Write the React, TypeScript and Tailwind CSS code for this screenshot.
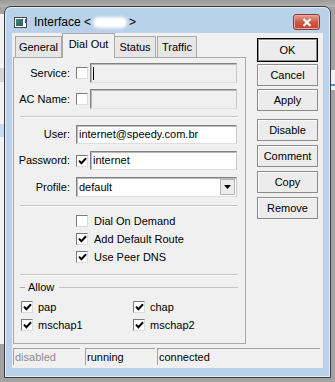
import React from "react";

function Check({ on }: { on?: boolean }) {
  return (
    <span className="flex h-[12px] w-[12px] shrink-0 items-center justify-center border border-t-[#7a7a7a] border-l-[#7a7a7a] border-r-[#dcdcdc] border-b-[#dcdcdc] bg-white">
      {on && (
        <svg width="9" height="8" viewBox="0 0 9 8">
          <path d="M1 3.6 L3.4 6.2 L8 1.2" fill="none" stroke="#000" strokeWidth="2" />
        </svg>
      )}
    </span>
  );
}

function Field({
  value,
  disabled,
  caret,
  className,
}: {
  value?: string;
  disabled?: boolean;
  caret?: boolean;
  className: string;
}) {
  return (
    <div
      className={`flex items-center border border-t-[#828282] border-l-[#828282] border-r-[#c8c8c8] border-b-[#dedede] pl-[2px] shadow-[inset_1px_1px_0_#b9b9b9] ${
        disabled ? "bg-[#f0f0f0]" : "bg-white"
      } ${className}`}
    >
      {caret && <span className="h-[13px] w-px bg-black" />}
      {value && <span className="leading-none">{value}</span>}
    </div>
  );
}

function Row({
  label,
  spacing,
  children,
}: {
  label: string;
  spacing: string;
  children: React.ReactNode;
}) {
  return (
    <div className={`flex items-center ${spacing}`}>
      <span className="w-[56px] text-right">{label}</span>
      <div className="ml-[6px] flex w-[161px] items-center">{children}</div>
    </div>
  );
}

function Sep({ spacing }: { spacing: string }) {
  return <div className={`ml-[6px] h-[2px] w-[218px] border-t border-t-[#c4c4c4] border-b border-b-white ${spacing}`} />;
}

function Btn({ label, spacing, def }: { label: string; spacing: string; def?: boolean }) {
  return (
    <div
      className={`flex w-[61px] items-center justify-center ${spacing} ${
        def ? "border border-black p-0" : ""
      }`}
    >
      <div className="flex h-full w-full items-center justify-center border border-[#8c8c8c] bg-[#ececec] shadow-[inset_1px_1px_0_#fbfbfb]">
        {label}
      </div>
    </div>
  );
}

function Opt({ label, on, gap }: { label: string; on?: boolean; gap: string }) {
  return (
    <div className="flex h-[18px] items-center">
      <Check on={on} />
      <span className={gap}>{label}</span>
    </div>
  );
}

export default function App() {
  return (
    <div className="relative h-[382px] w-[335px] overflow-hidden bg-[#a3a3a3] text-[11px] text-black font-['Liberation_Sans',Arial,sans-serif]">
      {/* desktop behind the dialog */}
      <div className="absolute left-0 top-0 h-[7px] w-[335px] bg-gradient-to-b from-[#9a9a9a] to-[#b4b4b4]" />
      <div className="absolute left-0 top-[14px] h-[330px] w-[5px] bg-[#f3f3f3]" />
      <div className="absolute left-0 top-[68px] h-[14px] w-[4px] bg-[#d6d6d6]" />
      <div className="absolute left-0 top-[124px] h-[13px] w-[5px] bg-[#c7dbf3]" />
      <div className="absolute right-0 top-[70px] h-[20px] w-[5px] bg-[#f0f0f0]" />
      <div className="absolute right-0 top-[84px] h-[2px] w-[5px] bg-[#5b8fd0]" />

      <div className="relative ml-[4px] mt-[6px] flex h-[372px] w-[327px] flex-col rounded-t-[7px] border border-[#3b3b3b] bg-[#b9d1ea] shadow-[inset_0_0_0_1px_#e2edf8]">
        {/* title bar */}
        <div className="flex h-[26px] items-start">
          <div className="ml-[9px] mt-[10px] flex h-[11px] w-[13px] border border-[#4a4a4a] bg-white">
            <div className="ml-px mt-px h-[7px] w-[7px] bg-gradient-to-br from-[#3f8a7e] to-[#2d5a64]" />
            <div className="ml-[2px] mt-px h-[4px] w-px bg-[#2d5a64]" />
          </div>
          <div className="ml-[7px] mt-[8px] flex items-center text-[12px] leading-[15px]">
            <span>Interface &lt;</span>
            <span className="mx-[2px] h-[11px] w-[34px] rounded-full bg-white blur-[1.5px]" />
            <span>&gt;</span>
          </div>
          <div className="ml-auto mr-[10px] mt-[7px] flex h-[16px] w-[27px] items-center justify-center rounded-[3px] border border-[#8a3b32] bg-gradient-to-b from-[#e6a396] via-[#cf5a44] to-[#c2402b] shadow-[inset_0_0_0_1px_#eaa89b]">
            <svg width="10" height="9" viewBox="0 0 10 9">
              <path d="M1.5 1 L8.5 8 M8.5 1 L1.5 8" stroke="#fff" strokeWidth="2.2" />
            </svg>
          </div>
        </div>

        {/* client area */}
        <div className="mx-[7px] flex h-[335px] flex-col bg-[#f0f0f0]">
          <div className="flex">
            {/* tabbed panel */}
            <div className="ml-px flex w-[233px] flex-col">
              <div className="flex h-[24px] items-end pl-[2px]">
                <div className="flex h-[21px] w-[47px] items-center justify-center border border-b-0 border-[#a9a9a9] bg-[#e6e6e6] pt-px">
                  General
                </div>
                <div className="relative z-10 -mb-px flex h-[25px] w-[53px] items-center justify-center border border-b-0 border-[#a9a9a9] bg-[#f0f0f0] pb-[3px]">
                  Dial Out
                </div>
                <div className="flex h-[21px] w-[41px] items-center justify-center border border-b-0 border-l-0 border-[#a9a9a9] bg-[#e6e6e6] pt-px">
                  Status
                </div>
                <div className="ml-px flex h-[21px] w-[40px] items-center justify-center border border-b-0 border-[#a9a9a9] bg-[#e6e6e6] pt-px">
                  Traffic
                </div>
              </div>
              <div className="flex h-[287px] flex-col border border-[#a9a9a9] bg-[#f0f0f0]">
                <Row label="Service:" spacing="mt-[5px] h-[20px]">
                  <Check />
                  <Field disabled caret className="ml-[2px] h-[20px] w-[147px]" />
                </Row>
                <Row label="AC Name:" spacing="mt-[6px] h-[20px]">
                  <Check />
                  <Field disabled className="ml-[2px] h-[20px] w-[147px]" />
                </Row>
                <Sep spacing="mt-[7px]" />
                <Row label="User:" spacing="mt-[7px] h-[19px]">
                  <Field value="internet@speedy.com.br" className="h-[19px] w-[161px]" />
                </Row>
                <Row label="Password:" spacing="mt-[7px] h-[19px]">
                  <Check on />
                  <Field value="internet" className="ml-[2px] h-[19px] w-[147px]" />
                </Row>
                <Row label="Profile:" spacing="mt-[7px] h-[20px]">
                  <div className="flex h-[20px] w-[161px] items-center border border-t-[#828282] border-l-[#828282] border-r-[#c8c8c8] border-b-[#dedede] bg-white pl-[2px] shadow-[inset_1px_1px_0_#b9b9b9]">
                    <span className="leading-none">default</span>
                    <div className="ml-auto mr-px flex h-[16px] w-[15px] items-center justify-center border border-[#b5b5b5] bg-[#ececec]">
                      <svg width="7" height="4" viewBox="0 0 7 4">
                        <path d="M0 0 H7 L3.5 4 Z" fill="#000" />
                      </svg>
                    </div>
                  </div>
                </Row>
                <Sep spacing="mt-[8px]" />
                <div className="ml-[62px] mt-[5px] flex flex-col">
                  <Opt label="Dial On Demand" gap="ml-[6px]" />
                  <Opt label="Add Default Route" on gap="ml-[6px]" />
                  <Opt label="Use Peer DNS" on gap="ml-[6px]" />
                </div>
                <Sep spacing="mt-[8px]" />
                <div className="mt-[4px] flex h-[14px] items-center pl-[6px] pr-[7px]">
                  <span className="h-px w-[5px] bg-[#a8a8a8]" />
                  <span className="ml-[3px]">Allow</span>
                  <span className="ml-[5px] h-px flex-1 bg-[#c4c4c4]" />
                </div>
                <div className="ml-[7px] mt-[4px] grid w-[200px] grid-cols-[112px_1fr]">
                  <Opt label="pap" on gap="ml-[5px]" />
                  <Opt label="chap" on gap="ml-[5px]" />
                  <Opt label="mschap1" on gap="ml-[5px]" />
                  <Opt label="mschap2" on gap="ml-[5px]" />
                </div>
              </div>
            </div>

            {/* buttons */}
            <div className="ml-[11px] flex flex-col pt-[5px]">
              <Btn label="OK" def spacing="h-[24px]" />
              <Btn label="Cancel" spacing="mt-[2px] h-[22px]" />
              <Btn label="Apply" spacing="mt-[3px] h-[22px]" />
              <Btn label="Disable" spacing="mt-[8px] h-[22px]" />
              <Btn label="Comment" spacing="mt-[4px] h-[22px]" />
              <Btn label="Copy" spacing="mt-[4px] h-[22px]" />
              <Btn label="Remove" spacing="mt-[4px] h-[22px]" />
            </div>
          </div>

          {/* status bar */}
          <div className="ml-px mt-[4px] flex h-[17px]">
            <div className="flex w-[67px] items-center border-l border-t border-[#a0a0a0] pl-px text-[#8d8d8d]">
              disabled
            </div>
            <div className="ml-[5px] flex w-[70px] items-center border-l border-t border-[#a0a0a0] pl-px">
              running
            </div>
            <div className="ml-[2px] flex w-[163px] items-center border-l border-t border-[#a0a0a0] pl-px">
              connected
            </div>
          </div>
        </div>
      </div>
    </div>
  );
}
